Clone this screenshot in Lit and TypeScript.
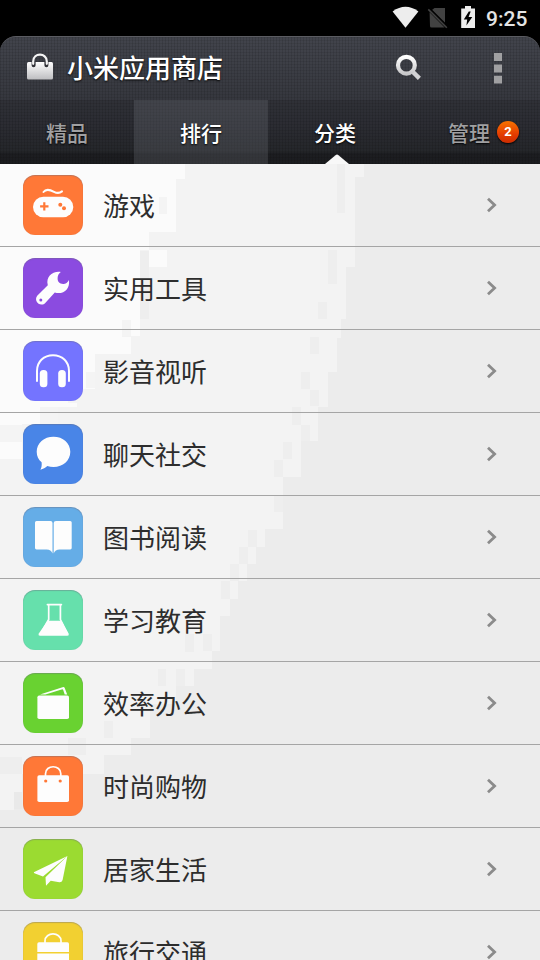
import { LitElement, html, css, svg, type SVGTemplateResult } from "lit";
import { customElement } from "lit/decorators.js";
import { classMap } from "lit/directives/class-map.js";

interface Category {
  name: string;
  tone: string;
  glyph: SVGTemplateResult;
}

const categories: Category[] = [
  {
    name: "游戏",
    tone: "orange",
    glyph: svg`
      <path class="line" stroke-width="2" d="M20.5 17C23.5 13 28 15.2 31 16.8C34.5 18.6 37 18 39 16.4"/>
      <rect x="10" y="21.7" width="40.3" height="20.6" rx="10.3"/>
      <path class="cut-line" stroke-width="2.2" d="M21.3 27.2v8.4M17.1 31.4h8.4"/>
      <circle class="cut" cx="37.3" cy="29.7" r="2"/><circle class="cut" cx="41" cy="33.3" r="2"/>`,
  },
  {
    name: "实用工具",
    tone: "purple",
    glyph: svg`
      <path d="M37.8 14C29.5 12.8 22.6 19 24.8 27.2L14.2 37.8C10.5 42.5 16.4 49.4 21.8 45.4L31.8 34.6C40.5 37 47.4 30.6 45.9 21.9C44.6 24.4 42.8 25.8 40.3 25.9C36.6 26 34.4 23.6 34.6 20C34.7 17.3 35.8 15.5 37.8 14Z"/>
      <circle class="cut" cx="17.8" cy="42" r="1.5"/>`,
  },
  {
    name: "影音视听",
    tone: "violet",
    glyph: svg`
      <path class="line" stroke-width="2" d="M14 40V30C14 20.5 21 14.2 30 14.2S46 20.5 46 30V40"/>
      <rect x="16.8" y="29" width="7.6" height="17.3" rx="3.6"/>
      <rect x="35.2" y="29" width="7.6" height="17.3" rx="3.6"/>`,
  },
  {
    name: "聊天社交",
    tone: "blue",
    glyph: svg`<path d="M30.5 12.7C40 12.7 47.3 19 47.3 27.8S40 43 30.5 43C28.2 43 26.2 42.7 24.3 42C22.3 43.8 20.3 45 17.4 45.8C18.5 43.8 19 41.5 18.6 38.3C15.5 35.7 13.7 32.3 13.7 27.8C13.7 19 21 12.7 30.5 12.7Z"/>`,
  },
  {
    name: "图书阅读",
    tone: "sky",
    glyph: svg`
      <path d="M13.5 14H27.5Q29.5 14 29.5 16V46.6Q28 42.4 23.8 42.4H13.5Q12 42.4 12 41V15.5Q12 14 13.5 14Z"/>
      <path d="M47.2 14H33Q30.7 14 30.7 16V46.6Q32.2 42.4 36.6 42.4H47.2Q48.7 42.4 48.7 41V15.5Q48.7 14 47.2 14Z"/>`,
  },
  {
    name: "学习教育",
    tone: "mint",
    glyph: svg`
      <path class="line" stroke-width="1.7" d="M24.4 14.6H38.4M25.7 15V29.5L18 43M37.4 15V29.5L44 43"/>
      <path d="M24.8 30.7H38.6L45.7 43.7Q46.4 45.8 44.4 45.8H17Q15 45.8 15.6 43.7Z"/>`,
  },
  {
    name: "效率办公",
    tone: "green",
    glyph: svg`
      <rect x="14.4" y="22.5" width="31.6" height="23.5" rx="1.8"/>
      <path d="M17 21.5L39.5 14.2Q41.3 13.6 41.8 15.2L44.2 21.6H41.7L40.2 17Q39.8 16 38.6 16.4L22.4 21.5Z"/>`,
  },
  {
    name: "时尚购物",
    tone: "orange",
    glyph: svg`
      <path class="line" stroke-width="1.7" d="M22.5 21V17.7C22.5 8.4 37.8 8.4 37.8 17.7V21"/>
      <rect x="14.4" y="19.3" width="31.6" height="26.7" rx="1.8"/>
      <circle class="cut" cx="22.7" cy="25" r="1.6"/><circle class="cut" cx="37.2" cy="25" r="1.6"/>`,
  },
  {
    name: "居家生活",
    tone: "lime",
    glyph: svg`
      <path d="M44.4 17L10.8 33.3Q10.8 34 12 34.4L20 37.6Z"/>
      <path d="M44.4 17L22.5 38.2L23 46.8L27.7 41.7L36.4 43.3Q38.8 43.5 39.6 41Z"/>`,
  },
  {
    name: "旅行交通",
    tone: "yellow",
    glyph: svg`
      <path class="line" stroke-width="1.7" d="M22 21V19C22 9.6 38 9.6 38 19V21"/>
      <path d="M16 20.3H44.4Q46 20.3 46 22V30H14.3V22Q14.3 20.3 16 20.3ZM14.3 31.5H46V46H14.3Z"/>`,
  },
];

/* Darker and lighter cells scattered along the edges of the tonal steps. */
const shadeCells = [
  [159, 33, 8, 17], [122, 156, 9, 16], [140, 87, 9, 68], [86, 208, 9, 16], [68, 225, 9, 14],
  [40, 243, 18, 17], [0, 261, 22, 17], [337, 0, 8, 49], [328, 86, 9, 34], [318, 138, 9, 17],
  [310, 173, 9, 17], [301, 208, 9, 17], [310, 226, 9, 16], [292, 243, 9, 18], [301, 261, 9, 16],
  [283, 278, 9, 17], [274, 296, 9, 17], [274, 331, 9, 17], [248, 366, 9, 17], [239, 383, 9, 17],
  [230, 400, 9, 17], [221, 417, 9, 18], [185, 470, 9, 18], [203, 470, 9, 17], [158, 505, 8, 17],
  [176, 505, 9, 17], [104, 557, 9, 17], [68, 574, 18, 17], [0, 593, 22, 17], [14, 628, 8, 17],
];
const lightCells = [[149, 86, 18, 17], [122, 173, 9, 17], [0, 278, 22, 17]];

@customElement("app-root")
export class AppRoot extends LitElement {
  static styles = css`
    :host { display: block; width: 540px; height: 960px; overflow: hidden; background: #000;
      font-family: Roboto, "Noto Sans CJK SC", sans-serif; }
    * { box-sizing: border-box; }
    svg { display: block; flex: none; }
    .status { height: 36px; display: flex; justify-content: flex-end; padding-right: 12px; color: #e4e4e4; }
    .status svg { width: 94px; height: 36px; }
    .clock { width: 42px; font: 500 21px/38px Roboto, sans-serif; white-space: nowrap; }
    .header { height: 128px; border-radius: 16px 16px 0 0; color: #fff; border-top: 1px solid #5b5c62;
      background:
        repeating-linear-gradient(90deg, rgba(0,0,0,.1) 0 1px, transparent 1px 3px),
        repeating-linear-gradient(0deg, rgba(0,0,0,.08) 0 1px, transparent 1px 3px),
        linear-gradient(#42444c 0, #393b42 45px, #303138 90px, #292b2f 115px, #212226 116px, #1e1f22 128px); }
    .bar { height: 63px; display: flex; align-items: center; }
    .bar .store { width: 26px; height: 28px; margin: -3px 14px 0 27px; }
    .title { flex: 1; font: 500 26px/40px "Noto Sans CJK SC", sans-serif; margin: -3px 0 0;
      text-shadow: 0 1px 2px #000; }
    .search { width: 28px; height: 28px; margin-right: 72px; margin-top: -3px; }
    .more { width: 8px; height: 31px; margin-right: 38px; margin-top: -1px; }
    .tabs { height: 64px; display: flex; background: rgba(0,0,0,.1); }
    .tab { position: relative; width: 134px; flex: none; display: flex; align-items: center; justify-content: center;
      font: 500 21px/30px "Noto Sans CJK SC", sans-serif; color: #a0a0a2; padding-bottom: 1px;
      text-shadow: 0 1px 2px #000; }
    .tab.bright { color: #fff; }
    .tab.pressed { background: rgba(120,122,132,.26); }
    .tab:last-child { width: 138px; gap: 7px; padding-left: 25px; }
    .badge { width: 22px; height: 22px; border-radius: 50%; text-align: center; color: #fff;
      font: 700 13px/22px Roboto, sans-serif; text-shadow: none;
      background: linear-gradient(#f77300, #e43c00 60%, #cc2c00); box-shadow: 0 1px 2px #000; }
    .pointer { position: absolute; left: 56px; bottom: 0; width: 26px; height: 10px; fill: #f8f8f8; }
    .list { position: relative; height: 796px; overflow: hidden; background: #ececec; }
    .backdrop { position: absolute; left: 0; top: 0; width: 540px; height: 796px; shape-rendering: crispEdges; }
    .step-mid { fill: #f3f3f3; }
    .step-light { fill: #fbfbfb; }
    .shade { fill: #dedede; fill-opacity: .25; }
    .row { position: relative; height: 83px; display: flex; align-items: center; padding: 0 42px 0 23px;
      border-bottom: 1px solid #a5a5a5; }
    .tile { width: 60px; height: 60px; border-radius: 12px; color: var(--tone); background: var(--tone);
      box-shadow: inset 0 1px 1px rgba(110,110,130,.4), inset 0 0 1px rgba(110,110,130,.2); }
    .tile svg { width: 60px; height: 60px; fill: #fdfdfd; }
    .line { fill: none; stroke: #fdfdfd; stroke-linecap: round; stroke-linejoin: round; }
    .cut { fill: var(--tone); }
    .cut-line { fill: none; stroke: var(--tone); }
    .orange { --tone: #ff7837; }
    .purple { --tone: #8b4be0; }
    .violet { --tone: #7474ff; }
    .blue { --tone: #4985e7; }
    .sky { --tone: #65ade7; }
    .mint { --tone: #66e0ac; }
    .green { --tone: #69d231; }
    .lime { --tone: #9bdb31; }
    .yellow { --tone: #f2d031; }
    .label { flex: 1; margin-left: 20px; font: 400 26px/40px "Noto Sans CJK SC", sans-serif; color: #2d2d2d; padding-bottom: 1px; }
    .chevron { width: 12px; height: 16px; fill: none; stroke: #8b8b8b; stroke-width: 2.8; }
  `;

  private renderStatus() {
    return html`<div class="status">
      <svg viewBox="393 0 94 36">
        <path fill="#ededed" d="M393.6 11.4Q406.5 2.2 419.4 11.4L406.5 27.8Z"/>
        <path fill="#424242" d="M435.5 8H446V23.8L432.6 10.2ZM430.6 12.2L445.6 27.5H432.5Q431 27.5 431 26Z"/>
        <path fill="none" stroke="#424242" stroke-width="1.6" d="M429.3 9.4L447.8 27.8"/>
        <path fill="none" stroke="#000" stroke-width="1.2" d="M430.7 8.1L448 25.4"/>
        <path fill="#ededed" d="M466 6H472V8.4H476V28H462.2V8.4H466Z"/>
        <path fill="#000" d="M469.8 11.5L464.8 19.4H468.2L467.4 25.5L473.3 16.9H469.6L471.7 11.5Z"/>
      </svg>
      <span class="clock">9:25</span>
    </div>`;
  }

  private renderHeader() {
    return html`<div class="header">
      <div class="bar">
        <svg class="store" viewBox="0 0 26 28">
          <defs><linearGradient id="silver" x1="0" y1="0" x2="0" y2="1"><stop stop-color="#fff"/><stop offset="1" stop-color="#bdbdc0"/></linearGradient></defs>
          <rect x="0" y="9" width="26" height="17.6" rx="1.5" fill="url(#silver)"/>
          <path fill="none" stroke="#303137" stroke-width="4" stroke-linecap="round" d="M6.6 12.2V9M19.4 12.2V9"/>
          <path fill="none" stroke="#f5f5f5" stroke-width="2.2" stroke-linecap="round" d="M6.2 10.8V8.4C6.2-.6 19.8-.6 19.8 8.4V10.8"/>
        </svg>
        <h1 class="title">小米应用商店</h1>
        <svg class="search" viewBox="0 0 28 28">
          <defs><linearGradient id="lens" x1="0" y1="0" x2="0" y2="1"><stop stop-color="#fff"/><stop offset="1" stop-color="#c8c8ca"/></linearGradient></defs>
          <path fill="none" stroke="#d2d2d4" stroke-width="4.4" stroke-linecap="butt" d="M18 18L25.4 25.4"/>
          <circle cx="12.4" cy="12.2" r="8.4" fill="none" stroke="url(#lens)" stroke-width="4.2"/>
        </svg>
        <svg class="more" viewBox="0 0 8 31"><path fill="#a0a0a2" d="M0 0H8V8H0ZM0 11.4H8V19.4H0ZM0 22.8H8V30.6H0Z"/></svg>
      </div>
      <div class="tabs">
        <div class="tab">精品</div>
        <div class="tab bright pressed">排行</div>
        <div class="tab bright">分类
          <svg class="pointer" viewBox="0 0 26 10"><path d="M1 10L11.5 1.2Q13 0 14.5 1.2L25 10Z"/></svg>
        </div>
        <div class="tab">管理<span class="badge">2</span></div>
      </div>
    </div>`;
  }

  private renderBackdrop() {
    const cell = (c: number[], name: string) =>
      svg`<rect class=${name} x=${c[0]} y=${c[1]} width=${c[2]} height=${c[3]}/>`;
    return html`<svg class="backdrop" viewBox="0 0 540 796">
      <path class="step-mid" d="M0 0H364V13H355V103H346V155H341V174H337V208H328V243H318V277H301V313H283V365H265V383H256V400H247V417H238V435H230V452H220V487H212V505H194V522H176V540H150V574H131V591H104V610H22V628H14V646H0Z"/>
      <path class="step-light" d="M0 0H185V15H176V68H149V86H140V172H122V190H95V225H77V243H58V260H22V278H0Z"/>
      ${shadeCells.map((c) => cell(c, "shade"))}
      ${lightCells.map((c) => cell(c, "step-light"))}
    </svg>`;
  }

  render() {
    return html`
      ${this.renderStatus()} ${this.renderHeader()}
      <div class="list">
        ${this.renderBackdrop()}
        ${categories.map(
          (c) => html`<div class="row">
            <div class=${classMap({ tile: true, [c.tone]: true })}>
              <svg viewBox="0 0 60 60">${c.glyph}</svg>
            </div>
            <span class="label">${c.name}</span>
            <svg class="chevron" viewBox="0 0 12 16"><path d="M2 1.7L8.6 8L2 14.3"/></svg>
          </div>`,
        )}
      </div>
    `;
  }
}
